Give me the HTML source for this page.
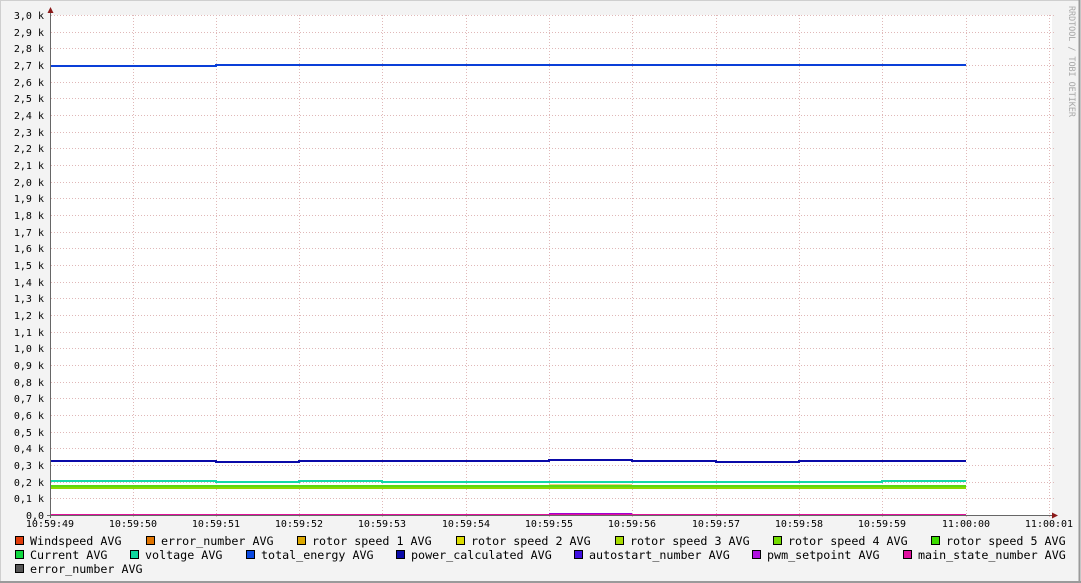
<!DOCTYPE html>
<html><head><meta charset="utf-8"><style>
html,body{margin:0;padding:0;background:#f3f3f3}
svg{display:block}
text{font-family:"DejaVu Sans Mono","Liberation Mono",monospace;fill:#000}
</style></head><body>
<svg width="1081" height="583" viewBox="0 0 1081 583" xmlns="http://www.w3.org/2000/svg">
<rect x="0" y="0" width="1081" height="583" fill="#f3f3f3"/>
<rect x="0.5" y="0.5" width="1079" height="581" fill="none" stroke="#cfcfcf"/>
<line x1="1079.5" y1="0" x2="1079.5" y2="583" stroke="#9a9a9a" stroke-width="2"/>
<line x1="0" y1="582" x2="1081" y2="582" stroke="#9a9a9a" stroke-width="2"/>
<rect x="51" y="15" width="1001" height="500" fill="#fff"/>
<g stroke="#e0b8b8" stroke-width="1" stroke-dasharray="1,2">
<path d="M51 498.5H1055M51 482.5H1055M51 465.5H1055M51 448.5H1055M51 432.5H1055M51 415.5H1055M51 398.5H1055M51 382.5H1055M51 365.5H1055M51 348.5H1055M51 332.5H1055M51 315.5H1055M51 298.5H1055M51 282.5H1055M51 265.5H1055M51 248.5H1055M51 232.5H1055M51 215.5H1055M51 198.5H1055M51 182.5H1055M51 165.5H1055M51 148.5H1055M51 132.5H1055M51 115.5H1055M51 98.5H1055M51 82.5H1055M51 65.5H1055M51 48.5H1055M51 32.5H1055M51 15.5H1055"/>
<path d="M133.5 15V518M216.5 15V518M299.5 15V518M382.5 15V518M466.5 15V518M549.5 15V518M632.5 15V518M716.5 15V518M799.5 15V518M882.5 15V518M966.5 15V518M1049.5 15V518"/>
</g>
<g fill="none" stroke-width="2">
<path d="M51 66H216V65H966" stroke="#0a3fd8"/>
<path d="M51 461H216V462H299V461H549V460H632V461H716V462H799V461H966" stroke="#0a0aa8"/>
<path d="M51 481H216V482H299V481H382V482H882V481H966" stroke="#14d8a8"/>
<path d="M549 485H632" stroke="#e0a000" stroke-width="1"/>
<path d="M51 486H966" stroke="#5ad810"/>
<path d="M51 488H966" stroke="#8ad800"/>
<path d="M549 514H632" stroke="#a000d0"/>
<path d="M51 515H966" stroke="#e0109a"/>
</g>
<line x1="50.5" y1="10" x2="50.5" y2="518" stroke="#666"/>
<line x1="47" y1="515.5" x2="1055" y2="515.5" stroke="#666"/>
<path d="M50.5 7L47.5 13H53.5Z" fill="#8b1a1a"/>
<path d="M1058 515.5L1052 512.5V518.5Z" fill="#8b1a1a"/>
<g font-size="10" text-anchor="end">
<text x="44" y="519">0,0</text>
<text x="44" y="502">0,1 k</text><text x="44" y="486">0,2 k</text><text x="44" y="469">0,3 k</text><text x="44" y="452">0,4 k</text><text x="44" y="436">0,5 k</text><text x="44" y="419">0,6 k</text><text x="44" y="402">0,7 k</text><text x="44" y="386">0,8 k</text><text x="44" y="369">0,9 k</text><text x="44" y="352">1,0 k</text><text x="44" y="336">1,1 k</text><text x="44" y="319">1,2 k</text><text x="44" y="302">1,3 k</text><text x="44" y="286">1,4 k</text><text x="44" y="269">1,5 k</text><text x="44" y="252">1,6 k</text><text x="44" y="236">1,7 k</text><text x="44" y="219">1,8 k</text><text x="44" y="202">1,9 k</text><text x="44" y="186">2,0 k</text><text x="44" y="169">2,1 k</text><text x="44" y="152">2,2 k</text><text x="44" y="136">2,3 k</text><text x="44" y="119">2,4 k</text><text x="44" y="102">2,5 k</text><text x="44" y="86">2,6 k</text><text x="44" y="69">2,7 k</text><text x="44" y="52">2,8 k</text><text x="44" y="36">2,9 k</text><text x="44" y="19">3,0 k</text>
</g>
<g font-size="10" text-anchor="middle">
<text x="50" y="527">10:59:49</text><text x="133" y="527">10:59:50</text><text x="216" y="527">10:59:51</text><text x="299" y="527">10:59:52</text><text x="382" y="527">10:59:53</text><text x="466" y="527">10:59:54</text><text x="549" y="527">10:59:55</text><text x="632" y="527">10:59:56</text><text x="716" y="527">10:59:57</text><text x="799" y="527">10:59:58</text><text x="882" y="527">10:59:59</text><text x="966" y="527">11:00:00</text><text x="1049" y="527">11:00:01</text>
</g>
<text x="0" y="0" font-size="8.4" style="fill:#a8a8a8" transform="translate(1069,6) rotate(90)">RRDTOOL / TOBI OETIKER</text>
<g stroke="#000" stroke-width="1">
<rect x="15.5" y="536.5" width="8" height="8" fill="#e03c0a"/>
<rect x="146.5" y="536.5" width="8" height="8" fill="#e07400"/>
<rect x="297.5" y="536.5" width="8" height="8" fill="#dca800"/>
<rect x="456.5" y="536.5" width="8" height="8" fill="#dcdc00"/>
<rect x="615.5" y="536.5" width="8" height="8" fill="#a8dc00"/>
<rect x="773.5" y="536.5" width="8" height="8" fill="#74dc00"/>
<rect x="931.5" y="536.5" width="8" height="8" fill="#3cdc00"/>
<rect x="15.5" y="550.5" width="8" height="8" fill="#10d840"/>
<rect x="130.5" y="550.5" width="8" height="8" fill="#10d8a0"/>
<rect x="246.5" y="550.5" width="8" height="8" fill="#0a48e0"/>
<rect x="396.5" y="550.5" width="8" height="8" fill="#0a0aa8"/>
<rect x="574.5" y="550.5" width="8" height="8" fill="#4010e0"/>
<rect x="752.5" y="550.5" width="8" height="8" fill="#b010e0"/>
<rect x="903.5" y="550.5" width="8" height="8" fill="#e010a0"/>
<rect x="15.5" y="564.5" width="8" height="8" fill="#545454"/>
</g>
<g font-size="11.7">
<text x="30" y="545">Windspeed AVG</text>
<text x="161" y="545">error_number AVG</text>
<text x="312" y="545">rotor speed 1 AVG</text>
<text x="471" y="545">rotor speed 2 AVG</text>
<text x="630" y="545">rotor speed 3 AVG</text>
<text x="788" y="545">rotor speed 4 AVG</text>
<text x="946" y="545">rotor speed 5 AVG</text>
<text x="30" y="559">Current AVG</text>
<text x="145" y="559">voltage AVG</text>
<text x="261" y="559">total_energy AVG</text>
<text x="411" y="559">power_calculated AVG</text>
<text x="589" y="559">autostart_number AVG</text>
<text x="767" y="559">pwm_setpoint AVG</text>
<text x="918" y="559">main_state_number AVG</text>
<text x="30" y="573">error_number AVG</text>
</g>
</svg>
</body></html>
